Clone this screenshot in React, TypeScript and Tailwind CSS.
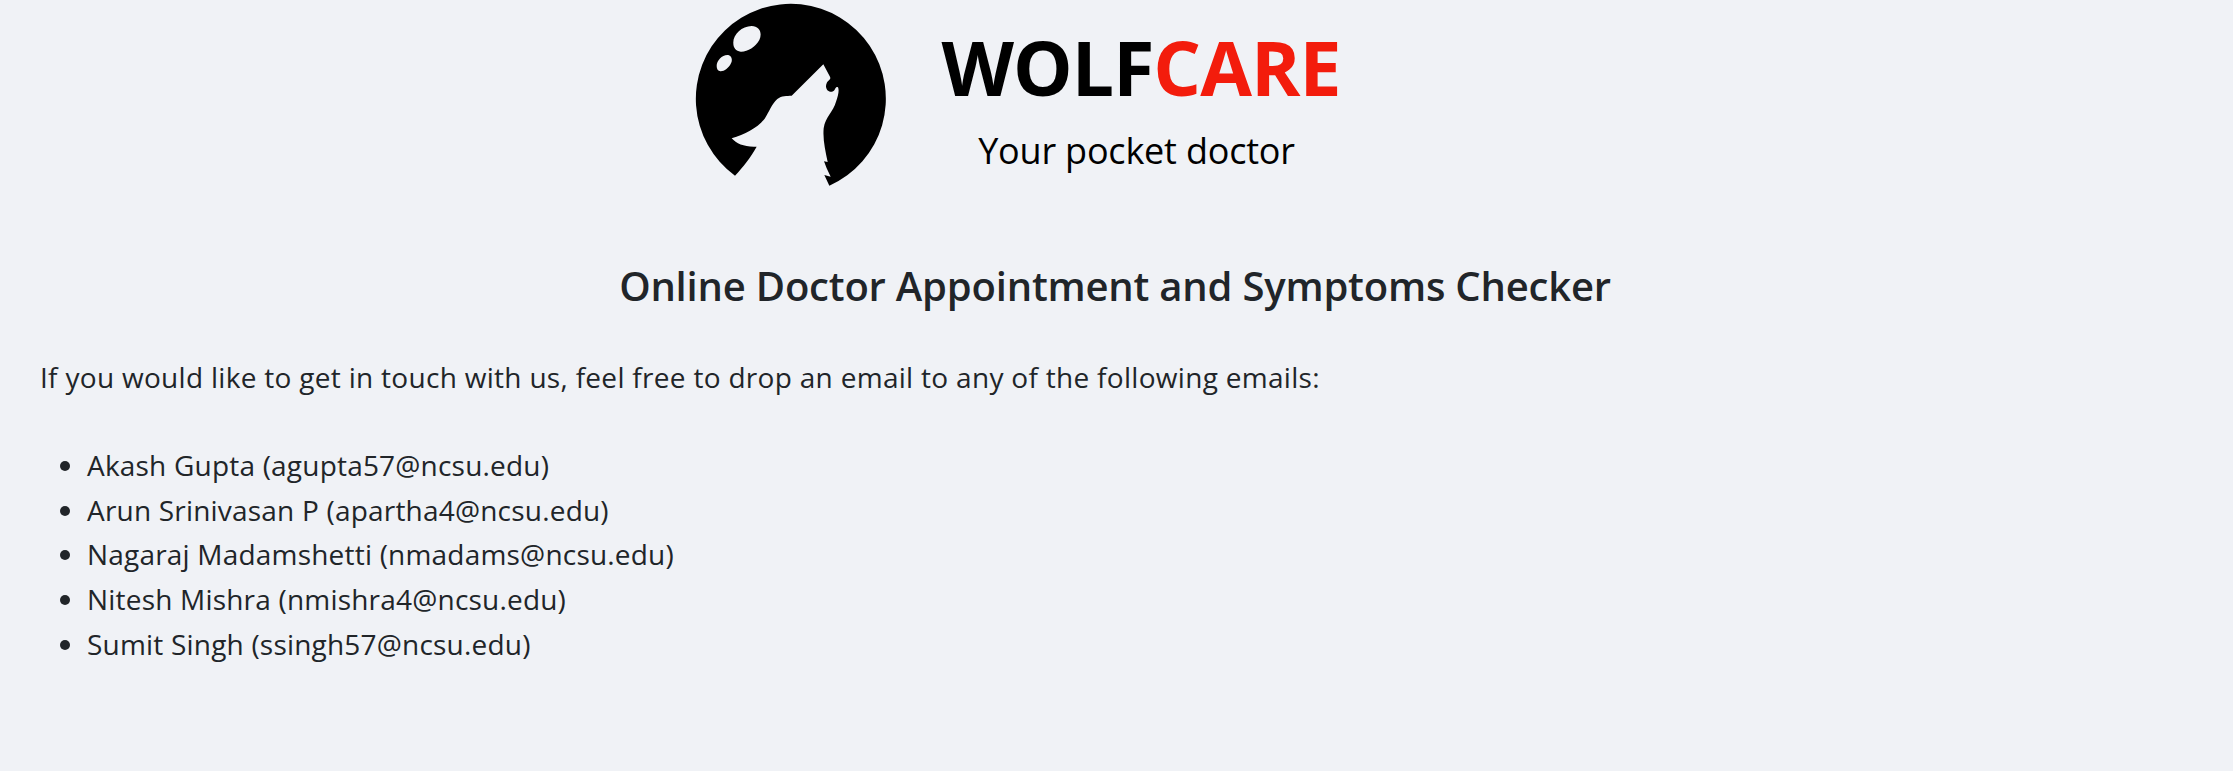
const contacts = [
  "Akash Gupta (agupta57@ncsu.edu)",
  "Arun Srinivasan P (apartha4@ncsu.edu)",
  "Nagaraj Madamshetti (nmadams@ncsu.edu)",
  "Nitesh Mishra (nmishra4@ncsu.edu)",
  "Sumit Singh (ssingh57@ncsu.edu)",
];

const WolfLogo = () => (
  <svg viewBox="0 0 720 600" className="block h-[200px] w-[240px] shrink-0">
    <path
      fillRule="evenodd"
      fill="#000"
      d="M195 527 A285 285 0 1 1 478 557 L463 525 L482 530 L470 505 L462 484 L473 486 C466 450 458 420 461 385 C466 350 490 335 498 305 C505 285 508 270 504 262 C495 256 498 272 486 275 C472 277 464 262 470 250 C474 240 484 240 480 230 L460 193 L365 287 C350 288 335 286 322 297 C305 312 298 335 284 356 C262 385 225 402 185 415 C200 432 225 442 260 440 C240 475 220 500 195 527 Z M190 130 C188 105 215 78 245 78 C268 78 278 98 268 120 C256 142 232 156 212 155 C198 154 190 144 190 130 Z M140 198 C140 182 156 165 172 165 C184 165 189 178 183 190 C176 204 162 215 151 214 C144 213 140 207 140 198 Z"
    />
  </svg>
);

export default function App() {
  return (
    <div className="min-h-screen bg-[#f0f2f6] font-['Open_Sans',sans-serif] text-[28px] leading-[44.8px] text-[#212529]">
      <div className="flex h-[212px] pl-[670px]">
        <WolfLogo />
        <div className="ml-[6px] w-[450px] text-center text-black">
          <p className="mt-[17px] text-[75px] leading-[100px] font-bold tracking-[-1px]">
            WOLF<span className="text-[#f31c0c]">CARE</span>
          </p>
          <p className="mt-[9px] pr-[9px] text-[36px] leading-[50px] tracking-[-0.2px]">Your pocket doctor</p>
        </div>
      </div>
      <div className="px-10">
        <h1 className="mt-[47px] pr-[3px] text-center text-[40px] leading-[54px] font-semibold tracking-[-0.2px]">
          Online Doctor Appointment and Symptoms Checker
        </h1>
        <p className="mt-[42px] tracking-[0.3px]">
          If you would like to get in touch with us, feel free to drop an email to any of the following emails:
        </p>
        <ul className="mt-[43px] list-disc pl-[47px] tracking-[0.2px]">
          {contacts.map((c) => (
            <li key={c}>{c}</li>
          ))}
        </ul>
      </div>
    </div>
  );
}
